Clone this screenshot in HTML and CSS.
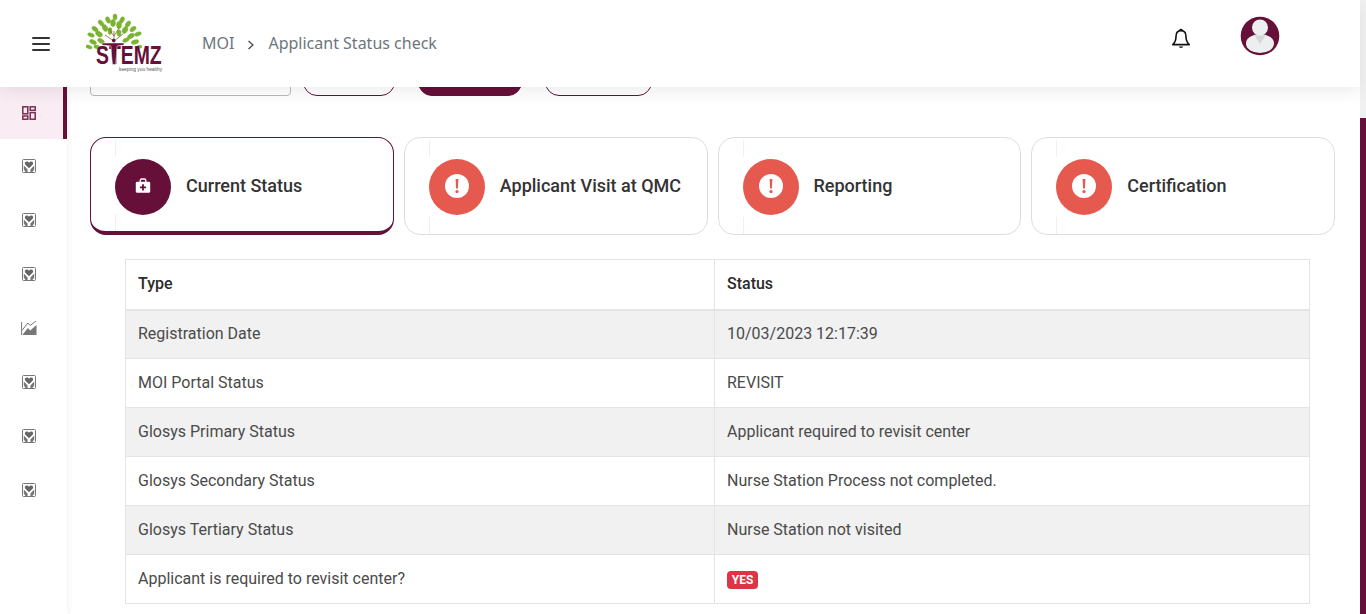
FILE: index.html
```html
<!DOCTYPE html>
<html lang="en">
<head>
<meta charset="utf-8">
<title>Applicant Status check</title>
<link rel="stylesheet" href="styles.css">
</head>
<body>
<svg class="defs" width="0" height="0" aria-hidden="true">
  <symbol id="care" viewBox="0 0 14 14">
    <rect x="0.5" y="0.5" width="13" height="13" rx="1" fill="none" stroke="#777" stroke-width="1"/>
    <path d="M7 9.2 3.4 5.8C2.2 4.4 3 2.4 4.8 2.4 5.8 2.4 6.6 3 7 3.7 7.4 3 8.2 2.4 9.2 2.4 11 2.4 11.8 4.4 10.6 5.8Z" fill="#666"/>
    <path d="M1.8 6.5 5.6 10.4V13H3.6L1.8 10.6ZM12.2 6.5 8.4 10.4V13H10.4L12.2 10.6Z" fill="#777"/>
  </symbol>
</svg>
<div class="app">
  <div class="page">
    <header class="topbar">
      <button class="burger" aria-label="Menu"><span></span><span></span><span></span></button>
      <svg class="logo" width="80" height="62" viewBox="0 0 80 62" aria-label="STEMZ">
        <g fill="#7ab32e" stroke="#7ab32e" stroke-width="0.6">
          <ellipse cx="29" cy="4" rx="2" ry="3"/><ellipse cx="22" cy="7" rx="2" ry="3.4" transform="rotate(-25 22 7)"/><ellipse cx="36" cy="7" rx="2" ry="3.4" transform="rotate(25 36 7)"/>
          <ellipse cx="15" cy="10" rx="2" ry="3.4" transform="rotate(-40 15 10)"/><ellipse cx="27" cy="10" rx="2.4" ry="3.6"/><ellipse cx="33" cy="12" rx="2.4" ry="3.6"/><ellipse cx="42" cy="11" rx="2" ry="3.4" transform="rotate(35 42 11)"/>
          <ellipse cx="9" cy="16" rx="2" ry="3.4" transform="rotate(-55 9 16)"/><ellipse cx="19" cy="15" rx="2.4" ry="3.6" transform="rotate(-30 19 15)"/><ellipse cx="39" cy="17" rx="2.4" ry="3.6" transform="rotate(30 39 17)"/><ellipse cx="47" cy="16" rx="2" ry="3.4" transform="rotate(50 47 16)"/>
          <ellipse cx="5" cy="22" rx="1.8" ry="3.4" transform="rotate(-70 5 22)"/><ellipse cx="13" cy="21" rx="2.4" ry="3.6" transform="rotate(-55 13 21)"/><ellipse cx="24" cy="18" rx="2" ry="3.4"/><ellipse cx="33" cy="20" rx="2" ry="3.2"/><ellipse cx="45" cy="23" rx="2.2" ry="3.6" transform="rotate(60 45 23)"/><ellipse cx="52" cy="21" rx="1.8" ry="3.4" transform="rotate(70 52 21)"/>
          <ellipse cx="7" cy="29" rx="2" ry="3.6" transform="rotate(-65 7 29)"/><ellipse cx="15" cy="28" rx="2" ry="3.6" transform="rotate(-60 15 28)"/><ellipse cx="40" cy="27" rx="1.8" ry="3.4" transform="rotate(65 40 27)"/><ellipse cx="49" cy="29" rx="2" ry="3.8" transform="rotate(75 49 29)"/>
          <ellipse cx="3" cy="34" rx="1.6" ry="3.2" transform="rotate(-70 3 34)"/><ellipse cx="11" cy="34" rx="1.8" ry="3.2" transform="rotate(-70 11 34)"/><ellipse cx="53" cy="34" rx="1.6" ry="3" transform="rotate(75 53 34)"/>
        </g>
        <path d="M28 28V18M28 28 19 22M28 28 37 21M28 23 23 16M28 23 33 15" stroke="#7a6a3a" stroke-width="0.8" fill="none"/>
        <text class="logo-word" transform="translate(10 51) scale(.776 1)">STEMZ</text>
        <text class="logo-tag" transform="translate(33 58) scale(.81 1)">keeping you healthy</text>
        <path d="M16 30H38V32L31 33 30.5 42 29.5 51.5H26.5L25.5 42 25 33 16 32Z" fill="#660f38" stroke="#fff" stroke-width="0.5"/>
        <circle cx="27.7" cy="27.6" r="1.8" fill="#660f38"/>
      </svg>
      <nav class="crumbs">
        <span>MOI</span>
        <svg class="crumb-sep" width="8" height="10" viewBox="0 0 8 10"><path d="M1.5 1 6 5 1.5 9" fill="none" stroke="#444" stroke-width="1.2"/></svg>
        <span>Applicant Status check</span>
      </nav>
      <div class="topbar-right">
        <svg class="bell" width="20" height="22" viewBox="0 0 20 22"><path d="M10 2.6C6.6 2.6 5 5.2 5 8.4 5 12.6 4 14.4 1.8 16.6H18.2C16 14.4 15 12.6 15 8.4 15 5.2 13.4 2.6 10 2.6Z" fill="none" stroke="#111" stroke-width="1.6" stroke-linejoin="round"/><path d="M8.7 2.4C8.9 1.2 11.1 1.2 11.3 2.4" fill="none" stroke="#111" stroke-width="1.5"/><path d="M7.8 18.6H12.2C11.8 20.4 8.2 20.4 7.8 18.6Z" fill="#111"/></svg>
        <svg class="avatar" width="40" height="40" viewBox="0 0 40 40"><defs><clipPath id="avclip"><circle cx="20" cy="20" r="19.3"/></clipPath></defs><circle cx="20" cy="20" r="19.3" fill="#660f38"/><g clip-path="url(#avclip)"><ellipse cx="20" cy="27.5" rx="14" ry="9.5" fill="#eceeef"/><path d="M14.5 19.5H25.5L20 28Z" fill="#d5d6d7"/><circle cx="20" cy="11.5" r="8" fill="#eceeef"/></g></svg>
      </div>
    </header>
    <div class="body-row">
      <aside class="sidebar">
        <a class="side-item side-active">
          <svg width="14" height="14" viewBox="0 0 14 14" fill="none" stroke="#7c2a52" stroke-width="1.5"><rect x="0.8" y="0.8" width="5" height="7"/><rect x="8.2" y="0.8" width="5" height="3.5"/><rect x="0.8" y="10" width="5" height="3.2"/><rect x="8.2" y="6.6" width="5" height="6.6"/></svg>
        </a>
        <a class="side-item"><svg width="14" height="14"><use href="#care"/></svg></a>
        <a class="side-item"><svg width="14" height="14"><use href="#care"/></svg></a>
        <a class="side-item"><svg width="14" height="14"><use href="#care"/></svg></a>
        <a class="side-item"><svg width="16" height="14" viewBox="0 0 16 14"><path d="M0.6 1V14" fill="none" stroke="#777" stroke-width="1"/><path d="M1.4 14 6.8 7 9.2 9.5 15.5 4V14Z" fill="#777"/><path d="M1 9.5 6.8 2 9.2 4.5 15 0" fill="none" stroke="#777" stroke-width="1"/></svg></a>
        <a class="side-item"><svg width="14" height="14"><use href="#care"/></svg></a>
        <a class="side-item"><svg width="14" height="14"><use href="#care"/></svg></a>
        <a class="side-item"><svg width="14" height="14"><use href="#care"/></svg></a>
      </aside>
      <main class="content">
        <div class="filters">
          <div class="filter-input"></div>
          <div class="filter-btn btn-a"></div>
          <div class="filter-btn btn-b"></div>
          <div class="filter-btn btn-c"></div>
        </div>
        <section class="cards">
          <article class="card card-active">
            <span class="disc disc-primary">
              <svg class="glyph" width="18" height="18" viewBox="0 0 18 18"><path d="M6.2 5V3.4C6.2 2.6 6.8 2 7.6 2H10.4C11.2 2 11.8 2.6 11.8 3.4V5" fill="none" stroke="#fff" stroke-width="1.3"/><rect x="1.8" y="4.8" width="14.4" height="11" rx="1.4" fill="#fff"/><path d="M9 7.2V13.4M5.9 10.3H12.1" stroke="#660f38" stroke-width="1.8"/></svg>
            </span>
            <h3>Current Status</h3>
          </article>
          <article class="card">
            <span class="disc disc-alert"><svg class="glyph" width="24" height="24" viewBox="0 0 24 24"><circle cx="12" cy="12" r="12" fill="#fff"/><path d="M10.6 5H13.4L12.9 14.4H11.1Z" fill="#e5594f"/><circle cx="12" cy="17.6" r="1.6" fill="#e5594f"/></svg></span>
            <h3>Applicant Visit at QMC</h3>
          </article>
          <article class="card">
            <span class="disc disc-alert"><svg class="glyph" width="24" height="24" viewBox="0 0 24 24"><circle cx="12" cy="12" r="12" fill="#fff"/><path d="M10.6 5H13.4L12.9 14.4H11.1Z" fill="#e5594f"/><circle cx="12" cy="17.6" r="1.6" fill="#e5594f"/></svg></span>
            <h3>Reporting</h3>
          </article>
          <article class="card">
            <span class="disc disc-alert"><svg class="glyph" width="24" height="24" viewBox="0 0 24 24"><circle cx="12" cy="12" r="12" fill="#fff"/><path d="M10.6 5H13.4L12.9 14.4H11.1Z" fill="#e5594f"/><circle cx="12" cy="17.6" r="1.6" fill="#e5594f"/></svg></span>
            <h3>Certification</h3>
          </article>
        </section>
        <table class="status">
          <thead>
            <tr><th>Type</th><th>Status</th></tr>
          </thead>
          <tbody>
            <tr><td>Registration Date</td><td>10/03/2023 12:17:39</td></tr>
            <tr><td>MOI Portal Status</td><td>REVISIT</td></tr>
            <tr><td>Glosys Primary Status</td><td>Applicant required to revisit center</td></tr>
            <tr><td>Glosys Secondary Status</td><td>Nurse Station Process not completed.</td></tr>
            <tr><td>Glosys Tertiary Status</td><td>Nurse Station not visited</td></tr>
            <tr><td>Applicant is required to revisit center?</td><td><span class="badge">YES</span></td></tr>
          </tbody>
        </table>
      </main>
    </div>
  </div>
  <div class="scrollbar"><div class="thumb"></div></div>
</div>
</body>
</html>
```
FILE: styles.css
```css
* { box-sizing: border-box; }
html, body { margin: 0; height: 100%; overflow: hidden; }
body { background: #fff; font-family: Roboto, "Liberation Sans", sans-serif; color: #333; }
.defs { position: absolute; }
.app { display: flex; height: 614px; overflow: hidden; }
.page { flex: 1; display: flex; flex-direction: column; min-width: 0; }
.scrollbar { width: 6px; background: #f1f1f1; padding-top: 118px; }
.thumb { height: 496px; background: #660f38; }

.topbar { height: 87px; flex: none; display: flex; align-items: flex-start; background: #fff; box-shadow: 0 4px 16px rgba(0,0,0,.08); position: relative; z-index: 3; }
.burger { display: flex; flex-direction: column; gap: 4px; width: 18px; margin: 37px 0 0 32px; padding: 0; border: 0; background: none; }
.burger span { display: block; height: 2px; background: #333; border-radius: 1px; }
.logo { margin: 13px 0 0 36px; flex: none; }
.logo-word { font: 700 25px "Liberation Sans", sans-serif; fill: #660f38; }
.logo-tag { font: 400 6px "Liberation Sans", sans-serif; fill: #555; }
.crumbs { display: flex; align-items: center; gap: 13px; margin: 32px 0 0 36px; font: 400 16px/22px "Noto Sans", sans-serif; color: #6c757d; }
.crumb-sep { margin-top: 3px; }
.topbar-right { margin-left: auto; display: flex; align-items: flex-start; }
.bell { margin-top: 28px; }
.avatar { margin: 16px 80px 0 49px; }

.body-row { flex: 1; display: flex; min-height: 0; }
.sidebar { width: 67px; flex: none; background: #fff; box-shadow: 3px 0 4px rgba(0,0,0,.035); position: relative; z-index: 2; }
.side-item { display: flex; align-items: center; justify-content: center; height: 54px; padding-right: 9px; }
.side-active { height: 52px; background: #f9ecf3; border-right: 4px solid #660f38; padding-right: 5px; }
.content { flex: 1; min-width: 0; padding: 0 25px 0 23px; }
.filters { height: 9px; overflow: hidden; display: flex; align-items: flex-end; }
.filter-input { width: 201px; height: 30px; border: 1px solid #b8b8b8; border-radius: 4px; flex: none; }
.filter-btn { height: 40px; border: 1px solid #660f38; border-radius: 14px; flex: none; }
.btn-a { width: 92px; margin-left: 12px; }
.btn-b { width: 104px; margin-left: 23px; background: #660f38; }
.btn-c { width: 107px; margin-left: 23px; }

.cards { display: grid; grid-template-columns: repeat(4, 1fr); gap: 10px; margin-top: 41px; }
.card { height: 98px; display: flex; align-items: flex-start; gap: 15px; padding: 21px 24px 0; border: 1px solid #dedede; border-radius: 16px; position: relative; background: #fff; }
.card::before, .card::after { content: ""; position: absolute; left: 24px; width: 1px; background: #fbeaee; }
.card::before { top: 2px; height: 17px; }
.card::after { bottom: 0; height: 17px; }
.card-active { border-color: #660f38; border-bottom-width: 4px; }
.disc { width: 56px; height: 56px; border-radius: 50%; display: flex; align-items: center; justify-content: center; flex: none; }
.disc-primary { background: #660f38; }
.disc-alert { background: #e5594f; }
.glyph { margin-bottom: 2px; }
.card h3 { margin: 16px 0 0; font: 500 18px/22px Roboto, sans-serif; color: #333; }

.status { width: 1185px; margin: 24px 0 0 35px; border-collapse: collapse; table-layout: fixed; background: #fff; }
.status th, .status td { border: 1px solid #e3e3e8; padding: 0 12px; height: 49px; text-align: left; font: 400 16px/20px Roboto, sans-serif; color: #4a4a4a; }
.status th { height: 50px; padding-bottom: 1px; font-weight: 500; color: #2b2b2b; border-bottom-width: 2px; }
.status th:first-child, .status td:first-child { width: 589px; }
.status tbody tr:nth-child(odd) { background: #f1f1f1; }
.badge { display: inline-block; background: #dc3545; color: #fff; font: 700 12px/18px Roboto, sans-serif; padding: 0 3px; border-radius: 4px; width: 31px; text-align: center; vertical-align: middle; }
```
